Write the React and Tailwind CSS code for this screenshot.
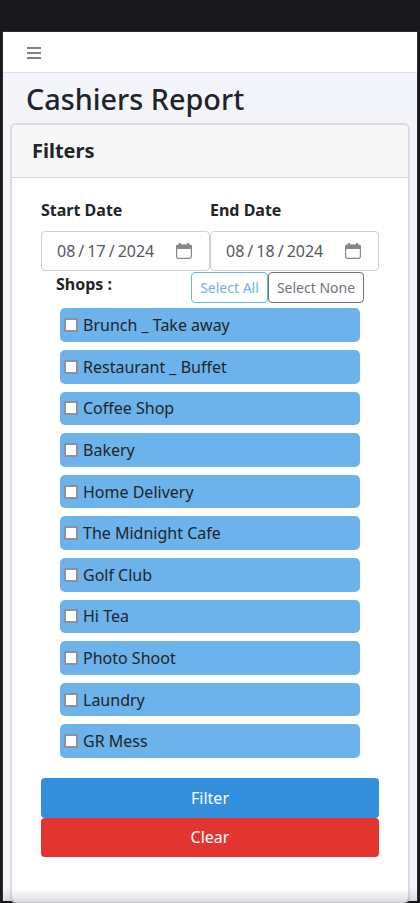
const shops = [
  'Brunch _ Take away', 'Restaurant _ Buffet', 'Coffee Shop', 'Bakery',
  'Home Delivery', 'The Midnight Cafe', 'Golf Club', 'Hi Tea',
  'Photo Shoot', 'Laundry', 'GR Mess',
];

function CalendarIcon() {
  return (
    <svg width="16" height="16" viewBox="0 0 16 16" fill="none" className="block">
      <rect x="0.6" y="2" width="14.8" height="13.4" rx="1.8" stroke="#85878b" strokeWidth="1.2" />
      <path d="M0.2 6V3.8Q0.2 1.8 2.2 1.8H13.8Q15.8 1.8 15.8 3.8V6Z" fill="#85878b" />
      <path d="M3 0H5V2H3ZM11 0H13V2H11Z" fill="#85878b" />
    </svg>
  );
}

function DateField({ label, month, day, year }) {
  return (
    <div className="w-[169px]">
      <div className="h-6 mb-[9px] text-[16px] leading-6 font-bold">{label}</div>
      <div className="flex h-10 items-center justify-between rounded-[4px] border border-[#ced0d8] pl-[15px] pr-[17px] text-[#55585e]">
        <div className="flex text-[16px] leading-6">
          <span>{month}</span>
          <span className="w-[12px] text-center">/</span>
          <span>{day}</span>
          <span className="w-[12px] text-center">/</span>
          <span>{year}</span>
        </div>
        <div className="pb-px">
          <CalendarIcon />
        </div>
      </div>
    </div>
  );
}

export default function App() {
  return (
    <div className="h-[903px] w-[420px] overflow-hidden bg-[#19191b] pt-[31px] pl-[2px] font-['Noto_Sans',sans-serif] text-[#212529]">
      <div className="relative h-[871px] w-[416px] border border-[#2d2d30] border-b-[#111315] bg-[#f4f5fa]">
        <header className="flex h-[41px] items-center border-b border-[#dedee2] bg-white pl-6">
          <svg width="14" height="12" viewBox="0 0 14 12" className="mt-[2px]">
            <path d="M0 1H14M0 6H14M0 11H14" stroke="#818181" strokeWidth="2" />
          </svg>
        </header>
        <h1 className="h-[51px] pl-[23px] pt-[8px] text-[28.8px] leading-[36px] font-medium">Cashiers Report</h1>
        <section className="ml-[8px] h-[778px] w-[398px] rounded-[5px] border border-[#dadadd] bg-white shadow-[0_0_1px_1px_#dcdde1]">
          <h2 className="flex h-[53px] items-center rounded-t-[4px] border-b border-[#d6d7d9] bg-[#f7f7f7] pl-[20px] text-[20px] font-bold">Filters</h2>
          <div className="px-[29px] pt-5">
            <div className="flex">
              <DateField label="Start Date" month="08" day="17" year="2024" />
              <DateField label="End Date" month="08" day="18" year="2024" />
            </div>
            <div className="flex h-[37.4px] justify-between pt-px pl-[15px] pr-[15px]">
              <div className="text-[16px] leading-6 font-bold">Shops :</div>
              <div className="flex">
                <button className="h-[31px] w-[77px] rounded-[4px] border border-[#6cb2eb] text-[14px] text-[#6cb2eb]">Select All</button>
                <button className="h-[31px] w-[96px] rounded-[4px] border border-[#6c757d] text-[14px] text-[#6c757d]">Select None</button>
              </div>
            </div>
            <div className="ml-[19px] flex w-[300px] flex-col gap-[8px]">
              {shops.map((shop) => (
                <label key={shop} className="flex h-[33.6px] items-center rounded-[5px] bg-[#6cb2eb] pl-1 text-[16px] leading-6">
                  <input type="checkbox" className="mr-[5px] h-[14px] w-[14px] appearance-none border-2 border-[#8f8f9d] bg-white" />
                  {shop}
                </label>
              ))}
            </div>
            <div className="mt-[20px] flex flex-col">
              <button className="h-10 rounded-[4px] bg-[#3490dc] text-[16px] text-white">Filter</button>
              <button className="h-[39px] rounded-[4px] bg-[#e3342f] text-[16px] text-white">Clear</button>
            </div>
          </div>
        </section>
        <div className="pointer-events-none absolute inset-x-0 bottom-0 h-[13px] bg-linear-to-t from-black/12 to-transparent" />
      </div>
    </div>
  );
}
